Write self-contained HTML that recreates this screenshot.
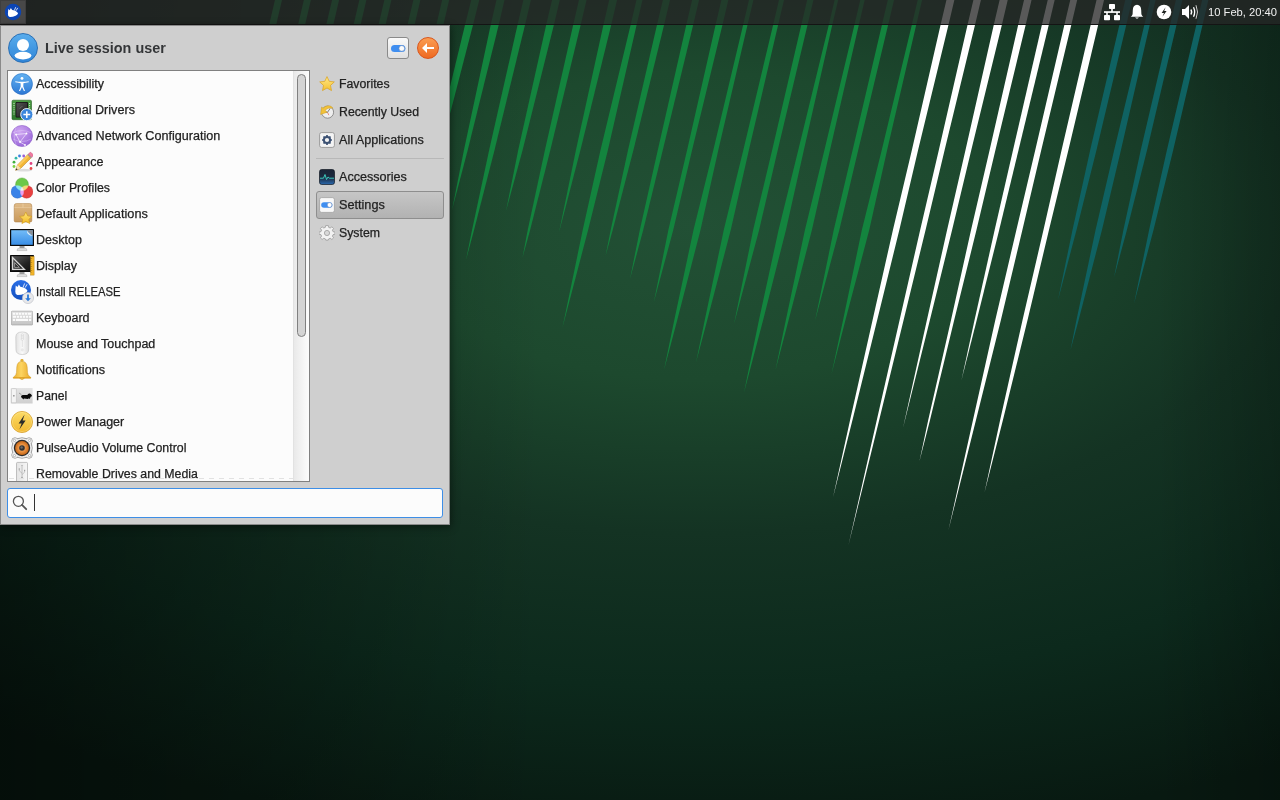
<!DOCTYPE html>
<html><head><meta charset="utf-8">
<style>
*{box-sizing:border-box;margin:0;padding:0}
html,body{width:1280px;height:800px;overflow:hidden;font-family:"Liberation Sans",sans-serif;color:#2f2f2f}
#bg{position:absolute;left:0;top:0;width:1280px;height:800px;background:#163a24}
#wall{position:absolute;left:0;top:0}
#panel{position:absolute;left:0;top:0;width:1280px;height:25px;background:rgba(38,38,38,0.765);border-bottom:1px solid #141414}
#pbtn{position:absolute;left:0;top:0;width:26px;height:24px;background:#484848;border:1px solid #3e3e3e}
#pbtn svg{position:absolute;left:-1px;top:-1px}
#clock{position:absolute;left:1208px;top:3.5px;font-size:11.2px;line-height:17px;color:#f0f0f0;white-space:nowrap}
#shadow{position:absolute;left:0;top:525px;width:456px;height:8px;background:linear-gradient(rgba(0,0,0,0.35),rgba(0,0,0,0))}
#menu{position:absolute;left:0;top:25px;width:450px;height:500px;background:#cfcfcf;border:1px solid #8a8a8a;box-shadow:1px 2px 8px rgba(0,0,0,0.45)}
#menu *{position:absolute}
#hdr-ava{left:7px;top:7px;width:30px;height:30px;border-radius:50%;background:linear-gradient(#58acec,#2f85d8);border:1px solid #2a6fb5}
#hdr-name{left:44px;top:12px;font-size:14.4px;font-weight:bold;line-height:20px;color:#343638;white-space:nowrap}
#btn-set{left:386px;top:11px;width:22px;height:22px;border:1px solid #8a8a8a;border-radius:3px;background:linear-gradient(#fafafa,#e0e0e0)}
#btn-back{left:416px;top:11px;width:22px;height:22px;border-radius:50%;background:linear-gradient(#fb9d52,#ee6a22);border:1px solid #d9561c}
#list{left:6px;top:44px;width:303px;height:412px;background:#fcfcfc;border:1px solid #808080;overflow:hidden}
#trough{left:285px;top:0;width:16px;height:410px;background:linear-gradient(90deg,#e9e9e9,#f7f7f7 70%,#fcfcfc);border-left:1px solid #e2e2e2}
#slider{left:3px;top:3px;width:9px;height:263px;border:1px solid #808080;border-radius:5px;background:#d4d4d4}
#dash{left:1px;top:407px;width:284px;height:1px;background:repeating-linear-gradient(90deg,#e2e2e2 0 5px,transparent 5px 10px)}
#sep{left:315px;top:132px;width:128px;height:1px;background:#b8b8b8}
#hl{left:315px;top:165px;width:128px;height:28px;border:1px solid #8e8e8e;border-radius:3px;background:linear-gradient(#c6c6c6,#b2b2b2)}
#search{left:6px;top:462px;width:436px;height:30px;border:1px solid #3d8ee6;border-radius:3px;background:#fcfcfc}
#caret{left:26px;top:5px;width:1px;height:17px;background:#333}
.row{height:26px;width:285px;font-size:12.5px;line-height:26px;color:#222;-webkit-text-stroke:0.25px #222;white-space:nowrap}
.row span{left:28px;top:-0.5px}
.row svg{left:3px;top:2px}
.cat{left:315px;height:28px;width:128px;font-size:12.3px;line-height:28px;color:#222;-webkit-text-stroke:0.25px #222;white-space:nowrap}
.cat span{left:23px;top:0}
.cat svg{left:3px;top:6px}
</style></head><body>
<div id="bg"></div>
<svg id="wall" width="1280" height="800">
<defs>
<radialGradient id="rg" cx="696.3" cy="225.7" r="1203.8" gradientUnits="userSpaceOnUse" gradientTransform="translate(696.3 225.7) scale(1 0.5106) translate(-696.3 -225.7)">
<stop offset="0" stop-color="#225035"/>
<stop offset="0.25" stop-color="#1d492e"/>
<stop offset="0.5" stop-color="#143323"/>
<stop offset="0.75" stop-color="#0c291c"/>
<stop offset="1" stop-color="#081911"/>
</radialGradient>
<linearGradient id="lg" x1="0" y1="0" x2="542.5" y2="0" gradientUnits="userSpaceOnUse">
<stop offset="0" stop-color="#000" stop-opacity="0.45"/>
<stop offset="1" stop-color="#000" stop-opacity="0"/>
</linearGradient>
<linearGradient id="rgo" x1="1156" y1="0" x2="1280" y2="0" gradientUnits="userSpaceOnUse">
<stop offset="0" stop-color="#000" stop-opacity="0"/>
<stop offset="1" stop-color="#000" stop-opacity="0.217"/>
</linearGradient>
</defs>
<rect width="1280" height="800" fill="url(#rg)"/>
<rect width="1280" height="800" fill="url(#lg)"/>
<rect width="1280" height="800" fill="url(#rgo)"/>
<polygon fill="#13843e" points="277.3,-10 266.8,35 273.8,35 284.3,-10"/>
<polygon fill="#13843e" points="306.2,-10 295.7,35 302.7,35 313.2,-10"/>
<polygon fill="#13843e" points="334.4,-10 323.9,35 330.9,35 341.4,-10"/>
<polygon fill="#13843e" points="361.7,-10 351.2,35 358.2,35 368.7,-10"/>
<polygon fill="#13843e" points="386.7,-10 376.2,35 383.2,35 393.7,-10"/>
<polygon fill="#13843e" points="415.7,-10 405.2,35 412.2,35 422.7,-10"/>
<polygon fill="#13843e" points="444.5,-10 434.0,35 441.0,35 451.5,-10"/>
<polygon fill="#13843e" points="473.78,-10.00 465.00,25.00 434.64,150.00 400.00,300.00 440.64,150.00 473.00,25.00 481.78,-10.00"/>
<polygon fill="#13843e" points="498.78,-10.00 490.70,25.00 463.95,150.00 452.00,210.00 467.75,150.00 498.70,25.00 506.78,-10.00"/>
<polygon fill="#13843e" points="525.73,-10.00 517.50,25.00 489.16,150.00 472.05,230.00 466.00,260.00 474.05,230.00 494.56,150.00 525.00,25.00 533.23,-10.00"/>
<polygon fill="#13843e" points="554.43,-10.00 546.15,25.00 518.23,150.00 506.00,211.00 522.63,150.00 553.85,25.00 562.13,-10.00"/>
<polygon fill="#13843e" points="581.34,-10.00 573.15,25.00 544.95,150.00 527.73,230.00 522.50,257.50 530.13,230.00 550.35,150.00 580.65,25.00 588.84,-10.00"/>
<polygon fill="#13843e" points="611.55,-10.00 603.40,25.00 575.95,150.00 559.00,232.50 580.45,150.00 611.20,25.00 619.35,-10.00"/>
<polygon fill="#13843e" points="638.83,-10.00 630.60,25.00 600.52,150.00 582.72,230.00 562.50,327.50 588.12,230.00 607.92,150.00 636.60,25.00 644.83,-10.00"/>
<polygon fill="#13843e" points="665.28,-10.00 656.95,25.00 628.04,150.00 610.69,230.00 605.50,256.00 612.69,230.00 633.44,150.00 664.05,25.00 672.38,-10.00"/>
<polygon fill="#13843e" points="694.48,-10.00 686.25,25.00 657.82,150.00 639.82,230.00 630.00,279.00 643.22,230.00 662.82,150.00 693.15,25.00 701.38,-10.00"/>
<polygon fill="#13843e" points="723.78,-10.00 715.55,25.00 687.11,150.00 668.35,230.00 653.75,302.50 673.25,230.00 692.11,150.00 722.45,25.00 730.68,-10.00"/>
<polygon fill="#13843e" points="751.35,-10.00 743.10,25.00 713.34,150.00 693.49,230.00 674.28,320.00 664.00,370.00 677.28,320.00 700.49,230.00 718.34,150.00 747.50,25.00 755.75,-10.00"/>
<polygon fill="#13843e" points="781.35,-10.00 773.10,25.00 743.32,150.00 723.75,230.00 704.77,320.00 696.00,362.50 707.27,320.00 730.75,230.00 748.92,150.00 778.10,25.00 786.35,-10.00"/>
<polygon fill="#13843e" points="809.52,-10.00 801.27,25.00 772.17,150.00 753.13,230.00 734.00,324.00 759.13,230.00 777.77,150.00 807.52,25.00 815.77,-10.00"/>
<polygon fill="#13843e" points="836.99,-10.00 828.75,25.00 798.28,150.00 778.55,230.00 758.96,320.00 744.00,392.50 763.16,320.00 785.95,230.00 803.88,150.00 832.25,25.00 840.49,-10.00"/>
<polygon fill="#13843e" points="862.63,-10.00 854.40,25.00 824.42,150.00 804.91,230.00 785.85,320.00 775.50,370.00 788.65,320.00 811.91,230.00 830.02,150.00 858.80,25.00 867.03,-10.00"/>
<polygon fill="#13843e" points="890.18,-10.00 881.90,25.00 852.64,150.00 833.72,230.00 815.00,321.00 839.32,230.00 858.24,150.00 888.10,25.00 896.38,-10.00"/>
<polygon fill="#13843e" points="920.07,-10.00 911.80,25.00 881.75,150.00 861.84,230.00 843.07,320.00 831.50,374.00 845.47,320.00 869.24,230.00 887.15,150.00 916.20,25.00 924.47,-10.00"/>
<polygon fill="#ffffff" points="948.81,-10.00 940.55,25.00 911.90,150.00 892.92,230.00 872.59,320.00 850.09,420.00 833.00,497.50 852.49,420.00 877.19,320.00 899.32,230.00 918.10,150.00 948.45,25.00 956.71,-10.00"/>
<polygon fill="#ffffff" points="975.76,-10.00 967.50,25.00 938.84,150.00 920.16,230.00 899.61,320.00 876.81,420.00 848.50,545.00 879.21,420.00 903.61,320.00 925.56,230.00 944.64,150.00 975.00,25.00 983.26,-10.00"/>
<polygon fill="#ffffff" points="1001.98,-10.00 993.75,25.00 965.50,150.00 947.08,230.00 926.91,320.00 903.00,428.00 929.91,320.00 952.08,230.00 971.30,150.00 1001.85,25.00 1010.08,-10.00"/>
<polygon fill="#ffffff" points="1026.37,-10.00 1018.15,25.00 989.64,150.00 971.05,230.00 951.02,320.00 928.23,420.00 919.50,461.00 930.03,420.00 954.22,320.00 976.45,230.00 995.44,150.00 1025.65,25.00 1033.87,-10.00"/>
<polygon fill="#ffffff" points="1050.11,-10.00 1041.85,25.00 1013.04,150.00 994.66,230.00 974.56,320.00 961.50,380.00 976.76,320.00 999.16,230.00 1018.54,150.00 1048.75,25.00 1057.01,-10.00"/>
<polygon fill="#ffffff" points="1072.62,-10.00 1064.35,25.00 1035.27,150.00 1016.37,230.00 995.31,320.00 972.99,420.00 948.50,530.00 975.99,420.00 1000.91,320.00 1022.37,230.00 1041.27,150.00 1071.25,25.00 1079.52,-10.00"/>
<polygon fill="#ffffff" points="1098.88,-10.00 1090.65,25.00 1061.61,150.00 1043.46,230.00 1022.55,320.00 1000.14,420.00 984.50,492.50 1002.94,420.00 1027.55,320.00 1048.96,230.00 1068.41,150.00 1098.15,25.00 1106.38,-10.00"/>
<polygon fill="#0f6262" points="1127.60,-10.00 1119.35,25.00 1090.20,150.00 1072.49,230.00 1058.00,300.00 1076.49,230.00 1096.50,150.00 1126.25,25.00 1134.50,-10.00"/>
<polygon fill="#0f6262" points="1152.54,-10.00 1144.30,25.00 1114.18,150.00 1095.55,230.00 1076.46,320.00 1070.50,350.00 1078.66,320.00 1101.95,230.00 1120.98,150.00 1149.70,25.00 1157.94,-10.00"/>
<polygon fill="#0f6262" points="1178.21,-10.00 1170.00,25.00 1140.77,150.00 1123.40,230.00 1114.00,277.50 1126.90,230.00 1147.07,150.00 1176.50,25.00 1184.71,-10.00"/>
<polygon fill="#0f6262" points="1204.49,-10.00 1196.28,25.00 1166.92,150.00 1149.10,230.00 1134.00,303.75 1153.50,230.00 1173.22,150.00 1202.53,25.00 1210.74,-10.00"/>
</svg>
<div id="panel">
 <div id="pbtn"><svg width="26" height="24" viewBox="0 0 26 24"><circle cx="13" cy="12" r="8.2" fill="#0c45b5"/><path d="M8.1 11 L8.3 9 L9.7 10.2 L10.9 8 L12.1 10 Q15.2 10.1 17 11.9 L18.1 13.2 Q17.5 14.7 15.6 15.7 Q12.6 17 9.7 16.9 Q7.8 16.5 7.9 14 Z" fill="#fff"/><path d="M14.5 10.2 L15.7 7.2 M16.1 10.7 L17.7 7.9" stroke="#fff" stroke-width="0.8"/></svg></div>
 <div id="tray"><svg width="110" height="24" viewBox="1096 0 110 24" style="position:absolute;left:1096px;top:0">
<g fill="#fff"><rect x="1109" y="4" width="6" height="5" rx="0.8"/><rect x="1111.2" y="8" width="1.6" height="4"/><rect x="1104" y="11.2" width="16" height="1.7"/><rect x="1106.2" y="12" width="1.6" height="3.5"/><rect x="1116.2" y="12" width="1.6" height="3.5"/><rect x="1104" y="15" width="6" height="5.2" rx="0.8"/><rect x="1114" y="15" width="6" height="5.2" rx="0.8"/></g>
<path d="M1137 4.8 Q1133 5.2 1132.8 10 L1132.6 14.2 Q1132 16 1130.8 16.8 L1143.2 16.8 Q1142 16 1141.4 14.2 L1141.2 10 Q1141 5.2 1137 4.8 Z" fill="#fff"/><path d="M1135 17.6 L1139 17.6 Q1137 19.8 1135 17.6 Z" fill="#fff"/>
<circle cx="1164" cy="12" r="7.3" fill="#fff"/><path d="M1165.6 7.2 L1161.6 13 L1164 13 L1162.4 16.8 L1166.6 11 L1164.2 11 Z" fill="#1e221f"/>
<path d="M1182 9 L1185 9 L1189 5 L1189 19 L1185 15 L1182 15 Z" fill="#fff"/><path d="M1191 9.5 Q1192.3 12 1191 14.5" stroke="#fff" stroke-width="1.6" fill="none"/><path d="M1193.5 7.2 Q1195.8 12 1193.5 16.8" stroke="#fff" stroke-width="1.3" fill="none"/><path d="M1196 5.2 Q1199 12 1196 18.8" stroke="#ccc" stroke-width="1" fill="none"/>
</svg></div>
 <div id="clock">10 Feb, 20:40</div>
</div>
<div id="menu">
 <div id="hdr-ava"><svg width="30" height="30" viewBox="0 0 30 30" style="left:-1px;top:-1px"><circle cx="15" cy="12" r="6" fill="#fff"/><ellipse cx="15" cy="22.6" rx="8.4" ry="3.8" fill="#fff"/></svg></div>
 <div id="hdr-name">Live session user</div>
 <div id="btn-set"><svg width="22" height="22" viewBox="0 0 22 22" style="left:-1px;top:-1px"><rect x="4" y="8" width="14.4" height="7" rx="3.5" fill="#3f8ef0"/><circle cx="14.8" cy="11.4" r="2.9" fill="#fafafa" stroke="#4a7ac0" stroke-width="0.6"/></svg></div>
 <div id="btn-back"><svg width="22" height="22" viewBox="0 0 22 22" style="left:-1px;top:-1px"><path d="M5 11 L10 6 L10 10 L17 10 L17 12 L10 12 L10 16 Z" fill="#fff"/></svg></div>
 <div id="list">
  <div id="rows"><div class="row" style="top:0px"><svg width="22" height="22" viewBox="0 0 22 22"><defs><linearGradient id="ga" x1="0" y1="0" x2="0" y2="1"><stop offset="0" stop-color="#62b2f2"/><stop offset="1" stop-color="#2d78d4"/></linearGradient></defs><circle cx="11" cy="11" r="10.7" fill="url(#ga)"/><circle cx="11" cy="11" r="10.4" fill="none" stroke="#2a66b8" stroke-width="0.6" opacity="0.7"/><circle cx="11" cy="5.4" r="1.45" fill="#fff"/><path d="M4.3 8.3 Q11 9.4 17.7 8.3 L17.7 9.2 Q14.4 9.9 12.4 10.2 L12.3 13.4 L14 17.9 L12.9 18.1 L11 13.9 L9.1 18.1 L8 17.9 L9.7 13.4 L9.6 10.2 Q7.6 9.9 4.3 9.2 Z" fill="#fff"/></svg><span>Accessibility</span></div>
<div class="row" style="top:26px"><svg width="22" height="22" viewBox="0 0 22 22"><defs><linearGradient id="gd" x1="0" y1="0" x2="0" y2="1"><stop offset="0" stop-color="#4a9a42"/><stop offset="1" stop-color="#2e7a2c"/></linearGradient><linearGradient id="gch" x1="0" y1="0" x2="1" y2="1"><stop offset="0" stop-color="#555"/><stop offset="1" stop-color="#1a1a1a"/></linearGradient></defs><rect x="1" y="1.2" width="19.5" height="19.5" rx="1.2" fill="url(#gd)" stroke="#245e22" stroke-width="0.6"/><rect x="4.6" y="3" width="12.4" height="15.6" rx="1" fill="#111"/><rect x="5.4" y="3.8" width="10.8" height="14" rx="0.6" fill="url(#gch)"/><path d="M8.5 10 Q9.5 7.6 11.5 7.4" stroke="#777" stroke-width="0.6" fill="none"/><g fill="#eee"><circle cx="3" cy="4.5" r="0.55"/><circle cx="3" cy="6.6" r="0.55"/><circle cx="3" cy="8.7" r="0.55"/><circle cx="3" cy="10.8" r="0.55"/><circle cx="3" cy="12.9" r="0.55"/><circle cx="3" cy="15" r="0.55"/><circle cx="18.6" cy="4.5" r="0.55"/><circle cx="18.6" cy="6.6" r="0.55"/><circle cx="18.6" cy="8.7" r="0.55"/></g><circle cx="15.8" cy="15.6" r="6.1" fill="#3b86dc" stroke="#fff" stroke-width="0.9"/><path d="M15.8 12.2 V19 M12.4 15.6 H19.2" stroke="#fff" stroke-width="1.5"/></svg><span style="transform:scaleX(1.0102);transform-origin:0 0">Additional Drivers</span></div>
<div class="row" style="top:52px"><svg width="22" height="22" viewBox="0 0 22 22"><defs><radialGradient id="gn" cx="0.4" cy="0.3" r="0.8"><stop offset="0" stop-color="#cfa6f2"/><stop offset="1" stop-color="#9461d6"/></radialGradient></defs><circle cx="11" cy="11" r="10.6" fill="url(#gn)" stroke="#8452c4" stroke-width="0.5"/><g stroke="#efe2ff" stroke-width="0.6" fill="none" opacity="0.55"><path d="M1.5 8 Q11 3 20.5 8 M2 14 Q11 19 20 14 M5 2.5 Q1.5 11 5 19.5"/></g><g stroke="#f6efff" stroke-width="0.7" fill="none" opacity="0.95"><path d="M5 9.5 L15.5 8.5 L9 17 Z M9 17 L14 20"/></g><g fill="#fff"><circle cx="5" cy="9.5" r="0.9"/><circle cx="15.5" cy="8.5" r="0.9"/><circle cx="9" cy="17" r="0.9"/><circle cx="14" cy="20" r="0.9"/></g></svg><span style="transform:scaleX(1.0082);transform-origin:0 0">Advanced Network Configuration</span></div>
<div class="row" style="top:78px"><svg width="22" height="22" viewBox="0 0 22 22"><circle cx="3" cy="15.5" r="1.4" fill="#7cd040"/><circle cx="3" cy="11.2" r="1.4" fill="#40b040"/><circle cx="5" cy="7.2" r="1.4" fill="#30b8a8"/><circle cx="8.5" cy="5" r="1.4" fill="#3a80e0"/><circle cx="12.7" cy="5" r="1.4" fill="#9a60d8"/><circle cx="20" cy="12.5" r="1.4" fill="#e04080"/><circle cx="20" cy="17.5" r="1.4" fill="#e84848"/><ellipse cx="13" cy="19.2" rx="8" ry="1.4" fill="#000" opacity="0.12"/><path d="M4.6 19.3 L6.5 14 L16.6 3.8 L19.9 7.1 L9.8 17.3 Z" fill="#f2b636" stroke="#b87a18" stroke-width="0.55"/><path d="M6.5 14 L16.6 3.8 L18.2 5.4 L8.1 15.6 Z" fill="#ffd268" opacity="0.7"/><path d="M16.6 3.8 L17.4 3 L20.7 6.3 L19.9 7.1 Z" fill="#a8a8a8" stroke="#777" stroke-width="0.4"/><path d="M17.4 3 L18.8 1.6 Q19.5 1 20.3 1.7 L22 3.4 Q22.5 4.2 21.9 4.9 L20.7 6.3 Z" fill="#f07aa0" stroke="#c04870" stroke-width="0.45"/><path d="M4.6 19.3 L6.5 14 L9.8 17.3 Z" fill="#f6e2b8"/><path d="M4.6 19.3 L5.3 17.3 L6.6 18.6 Z" fill="#222"/></svg><span>Appearance</span></div>
<div class="row" style="top:104px"><svg width="22" height="22" viewBox="0 0 22 22"><g style="isolation:isolate"><circle cx="11" cy="7.3" r="6.4" fill="#6cc848" stroke="#4a9a30" stroke-width="0.4" style="mix-blend-mode:screen"/><circle cx="6.4" cy="14.8" r="6.4" fill="#3a82e8" stroke="#2a60b8" stroke-width="0.4" style="mix-blend-mode:screen"/><circle cx="15.6" cy="14.8" r="6.4" fill="#e84040" stroke="#b83030" stroke-width="0.4" style="mix-blend-mode:screen"/></g></svg><span style="transform:scaleX(0.9865);transform-origin:0 0">Color Profiles</span></div>
<div class="row" style="top:130px"><svg width="22" height="22" viewBox="0 0 22 22"><defs><linearGradient id="gbx" x1="0" y1="0" x2="0" y2="1"><stop offset="0" stop-color="#e0bb88"/><stop offset="1" stop-color="#c8985a"/></linearGradient><linearGradient id="gst" x1="0" y1="0" x2="0" y2="1"><stop offset="0" stop-color="#ffe680"/><stop offset="1" stop-color="#f2b820"/></linearGradient></defs><path d="M3.2 3 Q3.2 0.4 5.5 0.4 L18.5 0.4 Q20.8 0.4 20.8 3 L20.8 17.5 Q20.8 19 19.3 19 L4.7 19 Q3.2 19 3.2 17.5 Z" fill="url(#gbx)" stroke="#a8783c" stroke-width="0.5"/><path d="M3.4 4.5 H20.6" stroke="#f0d8b0" stroke-width="0.6" opacity="0.7"/><path d="M12 0.6 V4.5" stroke="#f0d8b0" stroke-width="0.9" opacity="0.6"/><path d="M14.8 9 L16.7 12.9 L21 13.4 L17.8 16.3 L18.7 20.6 L14.8 18.4 L10.9 20.6 L11.8 16.3 L8.6 13.4 L12.9 12.9 Z" fill="url(#gst)" stroke="#d09a18" stroke-width="0.6" stroke-linejoin="round"/></svg><span style="transform:scaleX(1.0185);transform-origin:0 0">Default Applications</span></div>
<div class="row" style="top:156px"><svg width="22" height="22" viewBox="0 0 22 22" style="overflow:visible"><defs><linearGradient id="gds" x1="0" y1="0" x2="0" y2="1"><stop offset="0" stop-color="#72bcf8"/><stop offset="1" stop-color="#3a8ee6"/></linearGradient></defs><rect x="-1" y="0" width="24" height="17" rx="0.6" fill="#0a0a0a"/><rect x="0.2" y="1.2" width="21.6" height="14.6" fill="url(#gds)"/><path d="M15.8 1.2 L21.8 1.2 L21.8 7 Z" fill="#8a8e94"/><path d="M15.8 1.2 Q16 6.4 21.8 7 Q17 4.4 15.8 1.2 Z" fill="#f2f2f2"/><rect x="8.5" y="17" width="5" height="2.2" fill="#9a9a9a"/><path d="M6 21.6 Q6 19.2 8 19.2 L14 19.2 Q16 19.2 16 21.6 Z" fill="#dedede" stroke="#999" stroke-width="0.4"/></svg><span>Desktop</span></div>
<div class="row" style="top:182px"><svg width="22" height="22" viewBox="0 0 22 22" style="overflow:visible"><defs><linearGradient id="gdp" x1="0" y1="0" x2="1" y2="1"><stop offset="0" stop-color="#5a5a5a"/><stop offset="0.6" stop-color="#222"/><stop offset="1" stop-color="#111"/></linearGradient></defs><rect x="-1" y="0" width="24" height="17" rx="0.6" fill="#0a0a0a"/><rect x="0.2" y="1.2" width="21.6" height="14.6" fill="url(#gdp)"/><path d="M1.6 2.6 L1.6 14.4 L13.4 14.4 Z" fill="none" stroke="#d8d8d8" stroke-width="1.3"/><path d="M3.6 7.6 L3.6 12.4 L8.4 12.4 Z" fill="none" stroke="#bbb" stroke-width="0.7"/><rect x="19.5" y="1.5" width="3.6" height="18.6" fill="#f2b428" stroke="#a87a10" stroke-width="0.4"/><path d="M19.5 3.5h1.6M19.5 5.5h1M19.5 7.5h1.6M19.5 9.5h1M19.5 11.5h1.6M19.5 13.5h1M19.5 15.5h1.6M19.5 17.5h1" stroke="#7a5808" stroke-width="0.45"/><rect x="8.5" y="17" width="5" height="2.2" fill="#9a9a9a"/><path d="M6 21.6 Q6 19.2 8 19.2 L14 19.2 Q16 19.2 16 21.6 Z" fill="#dedede" stroke="#999" stroke-width="0.4"/></svg><span>Display</span></div>
<div class="row" style="top:208px"><svg width="22" height="22" viewBox="0 0 22 22" style="overflow:visible"><defs><linearGradient id="gin" x1="0" y1="0" x2="0" y2="1"><stop offset="0" stop-color="#2a6ee6"/><stop offset="1" stop-color="#1450c0"/></linearGradient></defs><circle cx="10" cy="9" r="10" fill="url(#gin)"/><g transform="translate(10.4 8.2) scale(1.2) translate(-13 -12)"><path d="M8.1 11 L8.3 9 L9.7 10.2 L10.9 8 L12.1 10 Q15.2 10.1 17 11.9 L18.1 13.2 Q17.5 14.7 15.6 15.7 Q12.6 17 9.7 16.9 Q7.8 16.5 7.9 14 Z" fill="#fff"/><path d="M14.5 10.2 L15.7 7.2 M16.1 10.7 L17.7 7.9" stroke="#fff" stroke-width="0.7"/></g><circle cx="17" cy="17" r="5.6" fill="#e8e8ea" stroke="#b8bcc4" stroke-width="0.6"/><path d="M17 13.6 V18.8" stroke="#2a78d8" stroke-width="1.8"/><path d="M14.2 17.2 L17 20.2 L19.8 17.2 Z" fill="#2a78d8"/></svg><span style="transform:scaleX(0.9005);transform-origin:0 0">Install RELEASE</span></div>
<div class="row" style="top:234px"><svg width="22" height="22" viewBox="0 0 22 22"><defs><linearGradient id="gkb" x1="0" y1="0" x2="0" y2="1"><stop offset="0" stop-color="#e2e2e2"/><stop offset="1" stop-color="#c4c4c4"/></linearGradient></defs><rect x="0.3" y="4.2" width="21.4" height="13.8" rx="1" fill="url(#gkb)" stroke="#9a9a9a" stroke-width="0.6"/><g fill="#fbfbfb"><rect x="1.8" y="5.8" width="2.2" height="2"/><rect x="4.8" y="5.8" width="2.2" height="2"/><rect x="7.8" y="5.8" width="2.2" height="2"/><rect x="10.8" y="5.8" width="2.2" height="2"/><rect x="13.8" y="5.8" width="2.2" height="2"/><rect x="16.8" y="5.8" width="3.4" height="2"/><rect x="1.8" y="8.8" width="3.2" height="2"/><rect x="5.8" y="8.8" width="2.2" height="2"/><rect x="8.8" y="8.8" width="2.2" height="2"/><rect x="11.8" y="8.8" width="2.2" height="2"/><rect x="14.8" y="8.8" width="2.2" height="2"/><rect x="17.8" y="8.8" width="2.4" height="2"/><rect x="1.8" y="11.8" width="2.2" height="2.2"/><rect x="4.8" y="11.8" width="12.2" height="2.2"/><rect x="17.8" y="11.8" width="2.4" height="2.2"/></g></svg><span>Keyboard</span></div>
<div class="row" style="top:260px"><svg width="22" height="22" viewBox="0 0 22 22" style="overflow:visible"><defs><linearGradient id="gms" x1="0" y1="0" x2="1" y2="0"><stop offset="0" stop-color="#e2e2e2"/><stop offset="0.5" stop-color="#fafafa"/><stop offset="1" stop-color="#dcdcdc"/></linearGradient></defs><path d="M4.8 4 Q4.8 -1 11.3 -1 Q17.8 -1 17.8 4 L17.6 17 Q17.4 21.5 11.3 21.5 Q5.2 21.5 5 17 Z" fill="url(#gms)" stroke="#bdbdbd" stroke-width="0.6"/><rect x="10.3" y="0.8" width="2" height="6.4" rx="0.6" fill="#fff" stroke="#c4c4c4" stroke-width="0.5"/><path d="M10.3 2.4h2M10.3 3.9h2M10.3 5.4h2" stroke="#c8c8c8" stroke-width="0.5"/><path d="M11.3 7.2 V14" stroke="#d0d0d0" stroke-width="0.6"/><circle cx="11.3" cy="16.8" r="1.6" fill="#e8e8e8"/></svg><span>Mouse and Touchpad</span></div>
<div class="row" style="top:286px"><svg width="22" height="22" viewBox="0 0 22 22"><defs><linearGradient id="gbl" x1="0" y1="0" x2="1" y2="0"><stop offset="0" stop-color="#eab030"/><stop offset="0.45" stop-color="#fcd460"/><stop offset="1" stop-color="#e8a828"/></linearGradient></defs><circle cx="11" cy="1.3" r="1.3" fill="#eab838" stroke="#c8901a" stroke-width="0.4"/><path d="M11 2.3 Q6.2 2.5 5.8 8 L5.5 13.4 Q5.2 16 3.3 17.6 Q2.3 18 2.3 18.6 L2.3 19.2 L19.7 19.2 L19.7 18.6 Q19.7 18 18.7 17.6 Q16.8 16 16.5 13.4 L16.2 8 Q15.8 2.5 11 2.3 Z" fill="url(#gbl)" stroke="#c8901a" stroke-width="0.45"/><path d="M2.3 18.2 H19.7 V19.2 H2.3 Z" fill="#e2a020"/><path d="M8.6 19.3 Q11 22.2 13.4 19.3 Z" fill="#f0bc40" stroke="#c8901a" stroke-width="0.4"/></svg><span style="transform:scaleX(1.0149);transform-origin:0 0">Notifications</span></div>
<div class="row" style="top:312px"><svg width="22" height="22" viewBox="0 0 22 22" style="overflow:visible"><defs><linearGradient id="gpn" x1="0" y1="0" x2="0" y2="1"><stop offset="0" stop-color="#e4e4e4"/><stop offset="1" stop-color="#cfcfcf"/></linearGradient></defs><rect x="-0.2" y="3" width="21.8" height="15.5" fill="url(#gpn)"/><rect x="0.4" y="3.6" width="5" height="14.2" rx="0.8" fill="#f4f4f4" stroke="#b4b4b4" stroke-width="0.5"/><circle cx="2.9" cy="10.8" r="0.65" fill="#333"/><path d="M8 8 L10.4 9.6" stroke="#444" stroke-width="0.45"/><path d="M10 11.4 Q10.6 9.8 12.6 10 L16.4 10.1 Q16.8 8.4 18.6 8.6 Q20 8.8 20.6 10 L21 11 Q20.6 11.8 19.6 11.8 Q19.4 13.4 18.6 14 L17.8 13.2 L17 14 L13 13.6 L12.2 14.4 L11.6 13.4 Q10.4 13 10 11.4 Z" fill="#0a0a0a"/></svg><span style="transform:scaleX(0.9750);transform-origin:0 0">Panel</span></div>
<div class="row" style="top:338px"><svg width="22" height="22" viewBox="0 0 22 22"><defs><linearGradient id="gpw" x1="0" y1="0" x2="0" y2="1"><stop offset="0" stop-color="#fcdc68"/><stop offset="1" stop-color="#f2b830"/></linearGradient></defs><circle cx="11" cy="11" r="10.6" fill="url(#gpw)" stroke="#d49a20" stroke-width="0.7"/><circle cx="11" cy="11" r="9.6" fill="none" stroke="#fff2b8" stroke-width="0.5" opacity="0.6"/><path d="M13.6 3.6 L7.6 12.4 L10.6 12.4 L8.4 18.6 L14.6 9.6 L11.6 9.6 Z" fill="#2a2a2a"/></svg><span>Power Manager</span></div>
<div class="row" style="top:364px"><svg width="22" height="22" viewBox="0 0 22 22"><defs><radialGradient id="gcone" cx="0.5" cy="0.5" r="0.5"><stop offset="0" stop-color="#f8c890"/><stop offset="0.55" stop-color="#e89040"/><stop offset="1" stop-color="#c86818"/></radialGradient></defs><g fill="#ececec" stroke="#7a7a7a" stroke-width="0.7"><circle cx="4" cy="4" r="3.2"/><circle cx="18" cy="4" r="3.2"/><circle cx="4" cy="18" r="3.2"/><circle cx="18" cy="18" r="3.2"/><circle cx="11" cy="11" r="10.2"/></g><g fill="#ececec"><circle cx="4" cy="4" r="2.8"/><circle cx="18" cy="4" r="2.8"/><circle cx="4" cy="18" r="2.8"/><circle cx="18" cy="18" r="2.8"/><circle cx="11" cy="11" r="9.6"/></g><g fill="#fff" stroke="#8a8a8a" stroke-width="0.5"><circle cx="3.4" cy="3.4" r="1.1"/><circle cx="18.6" cy="3.4" r="1.1"/><circle cx="3.4" cy="18.6" r="1.1"/><circle cx="18.6" cy="18.6" r="1.1"/></g><circle cx="11" cy="11" r="8.2" fill="#2a2a2a"/><circle cx="11" cy="11" r="6.9" fill="url(#gcone)"/><circle cx="11" cy="11" r="2.8" fill="#333"/><circle cx="10.6" cy="10.5" r="1.2" fill="#6a6a6a"/></svg><span style="transform:scaleX(0.9884);transform-origin:0 0">PulseAudio Volume Control</span></div>
<div class="row" style="top:390px"><svg width="22" height="22" viewBox="0 0 22 22" style="overflow:visible"><defs><linearGradient id="grm" x1="0" y1="0" x2="1" y2="0"><stop offset="0" stop-color="#e4e4e4"/><stop offset="1" stop-color="#f6f6f6"/></linearGradient></defs><rect x="5.5" y="-0.6" width="11" height="21" rx="1" fill="url(#grm)" stroke="#9c9c9c" stroke-width="0.6"/><g stroke="#a0a0a0" stroke-width="0.55" fill="none"><path d="M11 2.6 V14 M11 10.2 L8.3 7.8 V6.4 M11 11.6 L13.6 9.2 V7.6"/></g><g fill="#a0a0a0"><path d="M10.2 3 L11 1.8 L11.8 3 Z"/><circle cx="8.3" cy="6" r="0.7"/><rect x="13" y="6.8" width="1.2" height="1.2"/><circle cx="11" cy="14.6" r="0.9"/></g></svg><span style="transform:scaleX(0.9877);transform-origin:0 0">Removable Drives and Media</span></div></div>
  <div id="trough"><div id="slider"></div></div>
  <div id="dash"></div>
 </div>
 <div id="sep"></div>
 <div id="hl"></div>
 <div id="cats"><div class="cat" style="top:44px"><svg width="16" height="16" viewBox="0 0 16 16"><defs><linearGradient id="gs" x1="0" y1="0" x2="0" y2="1"><stop offset="0" stop-color="#ffe888"/><stop offset="1" stop-color="#f4c030"/></linearGradient></defs><path d="M8 0.6 L10.2 5.3 L15.3 5.9 L11.5 9.4 L12.5 14.6 L8 12 L3.5 14.6 L4.5 9.4 L0.7 5.9 L5.8 5.3 Z" fill="url(#gs)" stroke="#d8a020" stroke-width="0.7" stroke-linejoin="round"/></svg><span>Favorites</span></div>
<div class="cat" style="top:72px"><svg width="16" height="16" viewBox="0 0 16 16"><circle cx="8.6" cy="8.2" r="6" fill="#eeeeee" stroke="#7a7a7a" stroke-width="0.8"/><path d="M8.4 8.4 L11.2 4.4" stroke="#333" stroke-width="0.6"/><path d="M8.4 8.4 L5.6 7.4" stroke="#333" stroke-width="0.6"/><path d="M8.6 8.4 L9.8 11.2" stroke="#e05040" stroke-width="0.6"/><path d="M14 4.2 Q11.5 0.6 6.8 2.2 Q5.2 2.8 4.2 4.2 L2.6 3 L1.6 10.4 L8.2 8.2 L6.2 6.6 Q7.4 4.6 9.6 4.2 Q12 3.8 14 4.2 Z" fill="#f2c23a" stroke="#c8961a" stroke-width="0.45" stroke-linejoin="round"/></svg><span>Recently Used</span></div>
<div class="cat" style="top:100px"><svg width="16" height="16" viewBox="0 0 16 16"><rect x="0.6" y="0.6" width="14.8" height="14.8" rx="2" fill="#f4f4f4" stroke="#8a8a8a" stroke-width="0.8"/><circle cx="8" cy="8" r="3.1" fill="none" stroke="#3d5274" stroke-width="2"/><g stroke="#3d5274" stroke-width="1.7"><path d="M8 3 V5 M8 11 V13 M3 8 H5 M11 8 H13 M4.5 4.5 L5.9 5.9 M10.1 10.1 L11.5 11.5 M11.5 4.5 L10.1 5.9 M5.9 10.1 L4.5 11.5"/></g><circle cx="8" cy="8" r="1.1" fill="#f4f4f4"/></svg><span style="transform:scaleX(1.0256);transform-origin:0 0">All Applications</span></div>
<div class="cat" style="top:137px"><svg width="16" height="16" viewBox="0 0 16 16"><defs><linearGradient id="gac" x1="0" y1="0" x2="0" y2="1"><stop offset="0" stop-color="#1a2436"/><stop offset="0.55" stop-color="#1c2a40"/><stop offset="1" stop-color="#2a6ab0"/></linearGradient></defs><rect x="0.5" y="0.5" width="15" height="15" rx="2.2" fill="url(#gac)" stroke="#111822" stroke-width="0.7"/><path d="M1 9.2 L4.5 9.2 L6 5.5 L7.5 10.5 L9 8 L10.5 9.2 L15 9.2" fill="none" stroke="#40d8c8" stroke-width="0.9"/></svg><span style="transform:scaleX(1.0231);transform-origin:0 0">Accessories</span></div>
<div class="cat" style="top:164.5px"><svg width="16" height="16" viewBox="0 0 16 16"><rect x="0.6" y="0.6" width="14.8" height="14.8" rx="2" fill="#f8f8f8" stroke="#999" stroke-width="0.7"/><rect x="2.2" y="5.2" width="11.2" height="5.6" rx="2.8" fill="#3f8ef0"/><circle cx="10.6" cy="8" r="2.4" fill="#fff" stroke="#5a7ab0" stroke-width="0.5"/></svg><span style="transform:scaleX(1.0302);transform-origin:0 0">Settings</span></div>
<div class="cat" style="top:192.5px"><svg width="16" height="16" viewBox="0 0 16 16"><path d="M6.8 0.8 H9.2 L9.6 2.8 L11.2 3.5 L12.9 2.3 L14.6 4 L13.4 5.7 L14.1 7.3 L16 7.7 V9.9 L14.1 10.3 L13.4 11.9 L14.6 13.6 L12.9 15.3 L11.2 14.1 L9.6 14.8 L9.2 16 H6.8 L6.4 14.8 L4.8 14.1 L3.1 15.3 L1.4 13.6 L2.6 11.9 L1.9 10.3 L0 9.9 V7.7 L1.9 7.3 L2.6 5.7 L1.4 4 L3.1 2.3 L4.8 3.5 L6.4 2.8 Z" transform="translate(0 -0.4) scale(1 0.97)" fill="#f2f2f2" stroke="#9a9a9a" stroke-width="0.8"/><circle cx="8" cy="8" r="2.6" fill="#d8d8d8" stroke="#9a9a9a" stroke-width="0.8"/></svg><span>System</span></div></div>
 <div id="search"><svg width="24" height="24" viewBox="0 0 24 24" style="left:0;top:0"><circle cx="10.4" cy="12.3" r="5" fill="none" stroke="#555" stroke-width="1.3"/><path d="M14 15.9 L18.2 20.2" stroke="#555" stroke-width="1.8" stroke-linecap="round"/></svg><div id="caret"></div></div>
</div>
</body></html>
